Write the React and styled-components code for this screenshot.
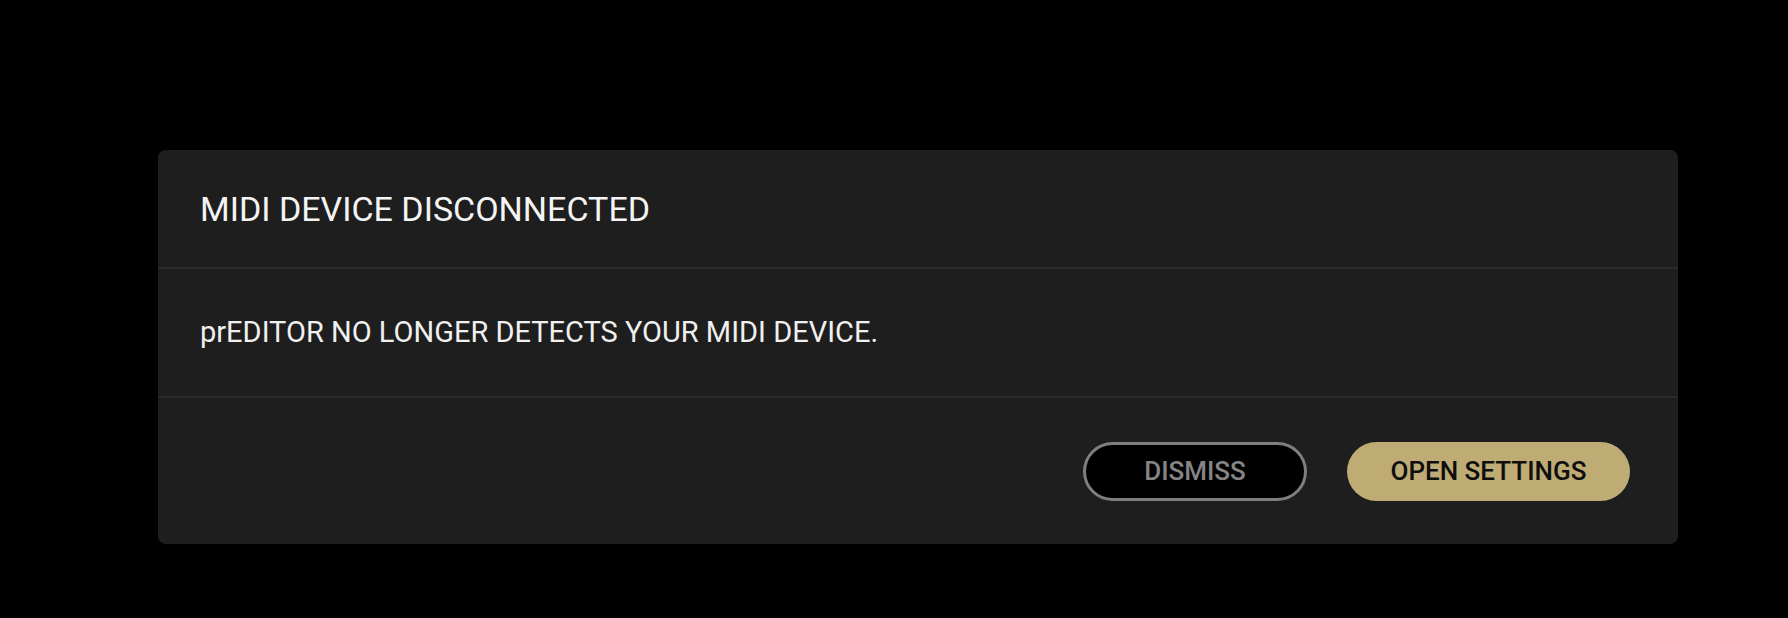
import React from "react";
import styled, { createGlobalStyle } from "styled-components";

const GlobalStyle = createGlobalStyle`
  html, body {
    margin: 0;
    padding: 0;
    background: #000;
  }
  body {
    font-family: Roboto, "Liberation Sans", sans-serif;
  }
`;

const Page = styled.div`
  min-height: 618px;
  background: #000;
  padding: 150px 110px 0 158px;
  box-sizing: border-box;
`;

const Dialog = styled.div`
  width: 1520px;
  background: #1e1e1e;
  border-radius: 8px;
  overflow: hidden;
`;

const Section = styled.div`
  display: flex;
  align-items: center;
  box-sizing: border-box;
  height: ${(p) => p.$height}px;
  padding: 0 48px 0 42px;
  border-bottom: ${(p) => (p.$divider ? "2px solid #2a2a2a" : "none")};
`;

const Title = styled.h2`
  margin: 0;
  font-size: 34px;
  font-weight: 400;
  color: #f4f4f4;
  line-height: 1;
`;

const Message = styled.p`
  margin: 0;
  font-size: 29px;
  font-weight: 400;
  color: #f0f0f0;
  line-height: 1;
`;

const Footer = styled(Section)`
  justify-content: flex-end;
  gap: 40px;
`;

const Button = styled.button`
  width: ${(p) => p.$width}px;
  height: 59px;
  box-sizing: border-box;
  border-radius: 30px;
  font-family: Roboto, "Liberation Sans", sans-serif;
  font-size: 26px;
  font-weight: 500;
  cursor: pointer;
  display: flex;
  align-items: center;
  justify-content: center;
  padding: 0;
  background: ${(p) => (p.$primary ? "#bfab74" : "#000")};
  color: ${(p) => (p.$primary ? "#0e0e0e" : "#858585")};
  border: ${(p) => (p.$primary ? "none" : "3px solid #7f7f7f")};
`;

export default function App() {
  return (
    <>
      <GlobalStyle />
      <Page>
        <Dialog>
          <Section $height={119} $divider>
            <Title>MIDI DEVICE DISCONNECTED</Title>
          </Section>
          <Section $height={129} $divider>
            <Message>prEDITOR NO LONGER DETECTS YOUR MIDI DEVICE.</Message>
          </Section>
          <Footer $height={146}>
            <Button $width={224}>DISMISS</Button>
            <Button $width={283} $primary>
              OPEN SETTINGS
            </Button>
          </Footer>
        </Dialog>
      </Page>
    </>
  );
}
